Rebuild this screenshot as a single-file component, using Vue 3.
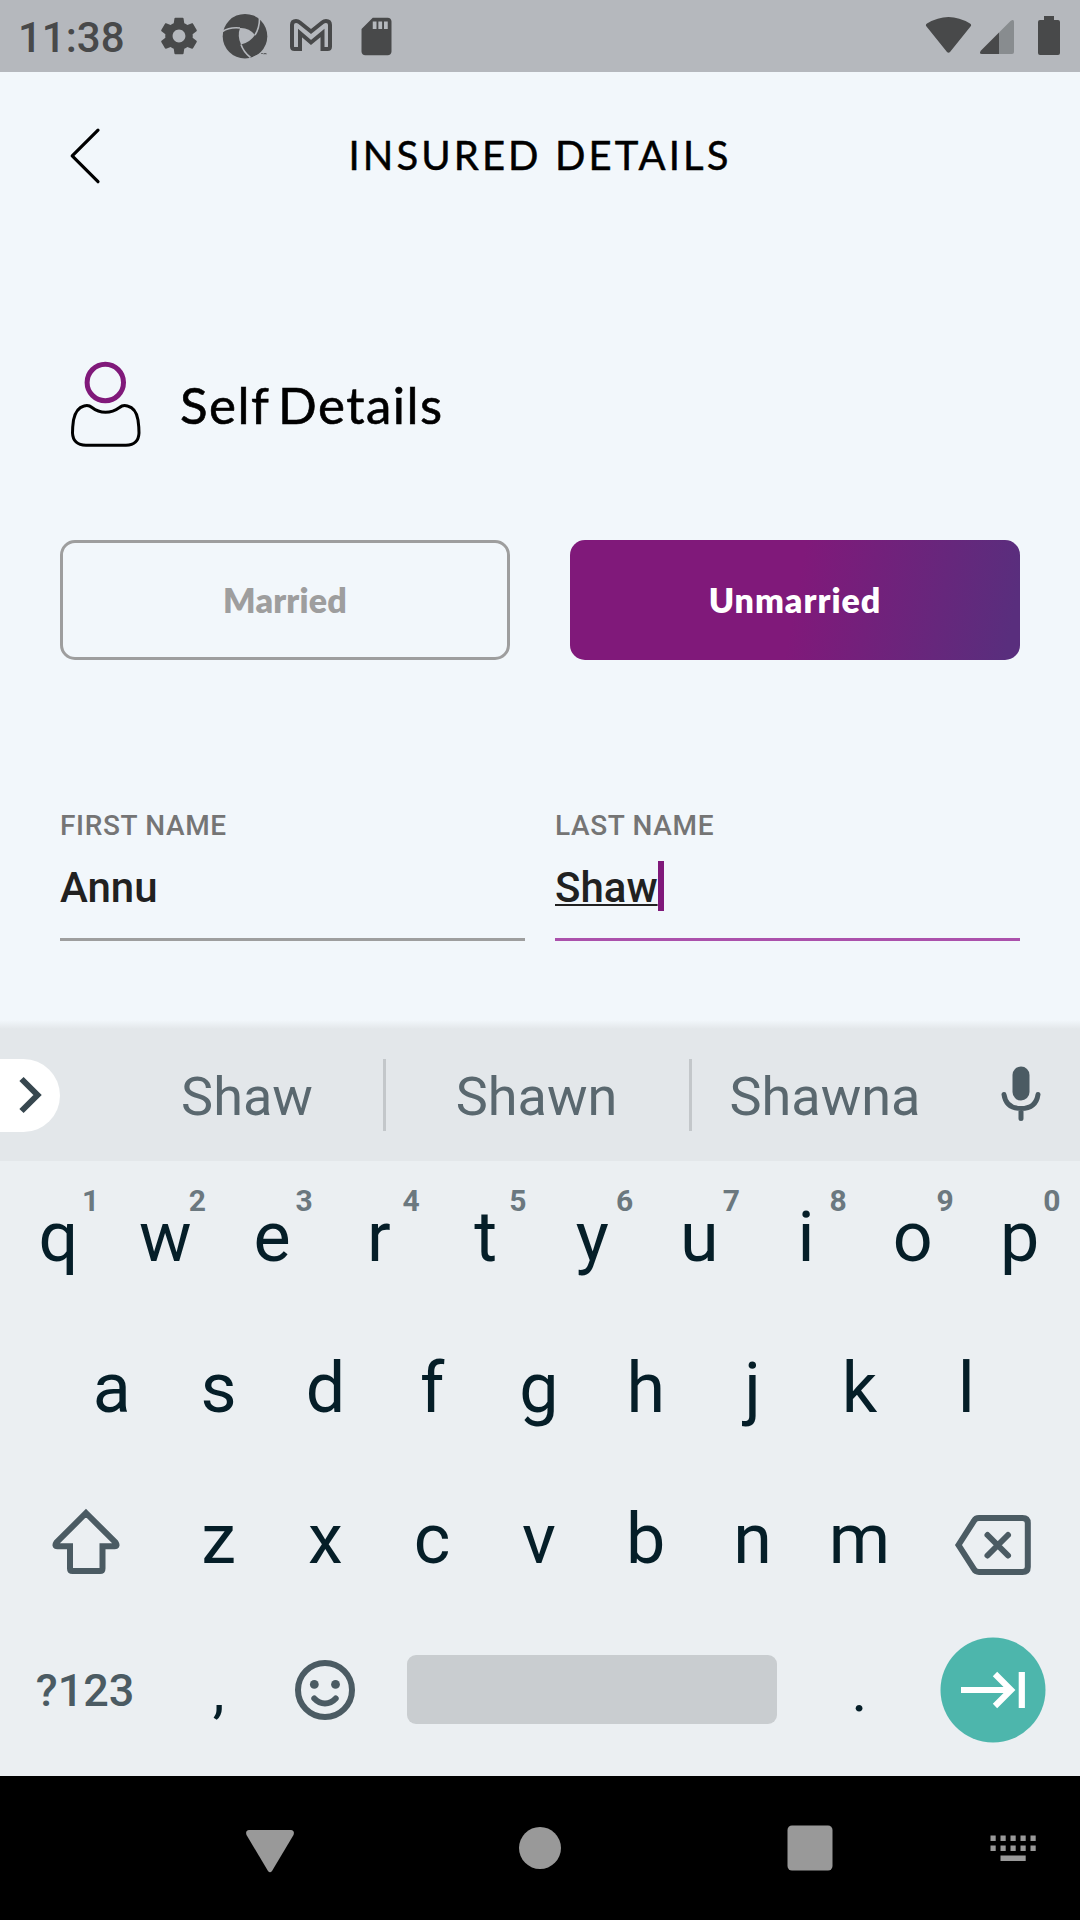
<script setup>
const rowOne = 'qwertyuiop'.split('').map((letter, i) => ({ letter, hint: (i + 1) % 10 }))
const rowTwo = 'asdfghjkl'.split('')
const rowThree = 'zxcvbnm'.split('')
const suggestions = ['Shaw', 'Shawn', 'Shawna']
</script>

<template>
  <div class="screen">
    <header class="status">
      <span class="clock">11:38</span>
      <svg class="gear" width="44" height="44" viewBox="0 0 24 24"><path d="M19.43 12.98c.04-.32.07-.64.07-.98s-.03-.66-.07-.98l2.11-1.65c.19-.15.24-.42.12-.64l-2-3.46c-.12-.22-.39-.3-.61-.22l-2.49 1c-.52-.4-1.08-.73-1.69-.98l-.38-2.65C14.46 2.18 14.25 2 14 2h-4c-.25 0-.46.18-.49.42l-.38 2.65c-.61.25-1.17.59-1.69.98l-2.49-1c-.23-.09-.49 0-.61.22l-2 3.46c-.13.22-.07.49.12.64l2.11 1.65c-.04.32-.07.65-.07.98s.03.66.07.98l-2.11 1.65c-.19.15-.24.42-.12.64l2 3.46c.12.22.39.3.61.22l2.49-1c.52.4 1.08.73 1.69.98l.38 2.65c.03.24.24.42.49.42h4c.25 0 .46-.18.49-.42l.38-2.65c.61-.25 1.17-.59 1.69-.98l2.49 1c.23.09.49 0 .61-.22l2-3.46c.12-.22.07-.49-.12-.64l-2.11-1.65zM12 15.5c-1.93 0-3.5-1.57-3.5-3.5s1.57-3.5 3.5-3.5 3.5 1.57 3.5 3.5-1.57 3.5-3.5 3.5z"/></svg>
      <svg class="swirl" width="46" height="46" viewBox="222 13 46 46">
        <circle cx="245" cy="36.2" r="22.3"/>
        <path class="cut" d="M240 28Q249 27.500 255 35Q250 42.500 241 44.500Q237 36 240 28Z"/>
        <path class="slit" d="M222.500 31.500Q229 27 240 28M259.500 18.500Q259.500 28 255 35M250.500 57.500Q243.500 52 241 44.500"/>
        <path class="cut" d="M252 57.500Q257 54 261.500 54L268 52V59H250Z"/>
        <path class="tm" d="M261 53.500h2M264 54.500v-1.500l1 1l1-1v1.500"/>
      </svg>
      <svg class="mail" width="44" height="44" viewBox="289 14 44 44"><path d="M292 46.500V25Q292 21 296 21Q298 21 299.500 22.300L311 31.500L322.500 22.300Q324 21 326 21Q330 21 330 25V46.500Q330 49 327.500 49H322.500V33L311 42.500L300 33V49H294.500Q292 49 292 46.500Z"/></svg>
      <svg class="sd" width="45" height="45" viewBox="0 0 24 24"><path d="M18 2h-8L4.020 8 4 20c0 1.100.9 2 2 2h12c1.100 0 2-.9 2-2V4c0-1.100-.9-2-2-2zm-6 6h-2V4h2v4zm3 0h-2V4h2v4zm3 0h-2V4h2v4z"/></svg>
      <svg class="signals" width="136" height="42" viewBox="925 15 136 42">
        <path d="M926.500 26.500Q925 24.800 927 23.500Q948.500 10.500 970 23.500Q972 24.800 970.500 26.500L950 52Q948.500 53.500 947 52Z"/>
        <path class="weak" d="M999 32.500L1010.500 21Q1014 18.500 1014 22V52Q1014 54 1012 54H999Z"/>
        <path d="M999 32.500V54H982Q978.500 54 981 50.500Z"/>
        <path d="M1044 16H1054V20H1058Q1060 20 1060 22V53Q1060 55 1058 55H1040Q1038 55 1038 53V22Q1038 20 1040 20H1044Z"/>
      </svg>
    </header>

    <main class="page">
      <div class="titlebar">
        <svg class="back" width="34" height="60" viewBox="68 126 34 60"><path d="M98 130.200L72.200 155.800L98 181.700"/></svg>
        <h1>INSURED DETAILS</h1>
      </div>

      <section class="self">
        <svg width="76" height="92" viewBox="68 359 76 92">
          <circle class="head" cx="105.300" cy="382.500" r="18.200"/>
          <path class="body" d="M84 406Q88.500 404.500 92 407.500Q98 412.300 105.500 412.300Q113 412.300 119.500 407.500Q123 404.500 127.500 406Q136 408 138 420Q139 427 139 433Q138.500 445 126 445.200H86Q73 445 72.500 433Q72.500 427 73.500 420Q76 408 84 406Z"/>
        </svg>
        <h2>Self Details</h2>
      </section>

      <div class="choices">
        <button class="choice">Married</button>
        <button class="choice active">Unmarried</button>
      </div>

      <div class="fields">
        <div class="field">
          <label>FIRST NAME</label>
          <div class="value"><span>Annu</span></div>
        </div>
        <div class="field focused">
          <label>LAST NAME</label>
          <div class="value"><span class="composing">Shaw</span><i class="caret"></i></div>
        </div>
      </div>
    </main>

    <section class="keyboard">
      <div class="suggest">
        <div class="more"><svg width="24" height="38" viewBox="0 0 24 38"><path d="M2.500 3L18.500 19L2.500 35"/></svg></div>
        <div v-for="word in suggestions" :key="word" class="word">{{ word }}</div>
        <svg class="mic" width="40" height="56" viewBox="0 0 40 56">
          <rect x="11.500" y="0.500" width="17" height="34" rx="8.500"/>
          <path d="M3 28.500Q5 42.500 20 42.500Q35 42.500 37 28.500M20 43V52.500"/>
        </svg>
      </div>

      <div class="row">
        <div v-for="k in rowOne" :key="k.letter" class="key">{{ k.letter }}<span class="hint">{{ k.hint }}</span></div>
      </div>
      <div class="row inset">
        <div v-for="k in rowTwo" :key="k" class="key">{{ k }}</div>
      </div>
      <div class="row">
        <div class="key wide">
          <svg class="line shift" width="70" height="68" viewBox="51 1508 70 68"><path d="M86 1513L115.500 1542.500Q118 1546.300 114.500 1546.300H102.500V1568.500Q102.500 1571 100 1571H72.500Q70 1571 70 1568.500V1546.300H57.500Q54 1546.300 56.500 1542.500Z"/></svg>
        </div>
        <div v-for="k in rowThree" :key="k" class="key">{{ k }}</div>
        <div class="key wide">
          <svg class="line del" width="78" height="62" viewBox="953 1514 78 62"><path d="M957.500 1545L973 1520.800Q974.500 1518 978 1518H1021.500Q1026.800 1518 1026.800 1523V1567Q1026.800 1572 1021.500 1572H978Q974.500 1572 973 1569.200Z"/><path d="M986.500 1535L1007 1555.500M1007 1535L986.500 1555.500" stroke-linecap="round"/></svg>
        </div>
      </div>
      <div class="row">
        <div class="key wide mode">?123</div>
        <div class="key punct">,</div>
        <div class="key">
          <svg class="line" width="62" height="62" viewBox="-31 -31 62 62"><circle r="27"/><path d="M-10.700 8.500Q-6 13.500 0 13.500Q6 13.500 10.700 8.500" stroke-linecap="round"/><g class="eyes"><circle cx="-10.700" cy="-5.600" r="4.400"/><circle cx="10.500" cy="-5.600" r="4.400"/></g></svg>
        </div>
        <div class="key spacebar"><div></div></div>
        <div class="key punct">.</div>
        <div class="key wide">
          <svg class="next" width="106" height="106" viewBox="-53 -53 106 106"><circle r="52.500"/><path d="M-32 0H16M2 -16L18 0L2 16M28.800 -18V18"/></svg>
        </div>
      </div>
    </section>

    <nav class="nav">
      <svg width="50" height="44" viewBox="245 1829 50 44"><path d="M249 1830H291Q295 1830.500 293.500 1835L272 1871Q270 1873.500 268 1871L246.500 1835Q245 1830.500 249 1830Z"/></svg>
      <svg width="44" height="44" viewBox="-22 -22 44 44"><circle r="21"/></svg>
      <svg width="46" height="46" viewBox="0 0 46 46"><rect x=".5" y=".5" width="45" height="45" rx="4.500"/></svg>
      <svg class="ime" width="47" height="27" viewBox="0 0 47 27">
        <template v-for="c in 5" :key="c">
          <rect :x="c * 10 - 9.500" y=".5" width="5.200" height="5.500"/>
          <rect :x="c * 10 - 9.500" y="10.500" width="5.200" height="5.500"/>
        </template>
        <rect x="10.500" y="20.500" width="25.200" height="5.500"/>
      </svg>
    </nav>
  </div>
</template>

<style>
body { margin: 0; background: #f2f7fb; }
</style>

<style scoped>
.screen { width: 1080px; height: 1920px; overflow: hidden; display: flex; flex-direction: column; background: #f2f7fb; font-family: Roboto, "Liberation Sans", sans-serif; }
svg { display: block; flex: none; }

.status { height: 72px; flex: none; box-sizing: border-box; display: flex; align-items: center; background: #b5b8bd; padding: 0 19px 0 18px; }
.status svg { fill: #48494a; }
.clock { width: 139px; padding-top: 3px; font-size: 42px; font-weight: 500; line-height: 72px; color: #48494a; }
.swirl { margin-left: 21px; }
.status .cut { fill: #b5b8bd; }
.slit { fill: none; stroke: #b5b8bd; stroke-width: 1.6; }
.tm { fill: none; stroke: #48494a; stroke-width: .7; }
.status .mail { margin-left: 21px; fill: none; stroke: #48494a; stroke-width: 4; }
.sd { margin-left: 21px; }
.signals { margin-left: auto; }
.status .weak { fill: #888c8f; }

.page { height: 946px; flex: none; }
.titlebar { height: 168px; display: grid; grid-template-columns: 130px 1fr 130px; align-items: center; }
.back { margin-left: 68px; fill: none; stroke: #000; stroke-width: 3.2; stroke-linecap: round; stroke-linejoin: round; }
h1 { margin: 0 0 2px; font: 400 40px/60px Lato, sans-serif; letter-spacing: 3.1px; text-align: center; color: #000; white-space: nowrap; -webkit-text-stroke: .5px #000; }
.self { height: 92px; margin: 119px 0 0 68px; display: flex; align-items: center; gap: 36px; }
h2 { margin: 0; font: 400 51px/60px Lato, sans-serif; letter-spacing: 1.5px; word-spacing: -6px; color: #000; white-space: nowrap; -webkit-text-stroke: .6px #000; }
.head { fill: none; stroke: #80197a; stroke-width: 5; }
.body { fill: none; stroke: #000; stroke-width: 3; }
.choices { margin: 89px 60px 0; display: flex; gap: 60px; }
.choice { width: 450px; flex: none; height: 120px; box-sizing: border-box; padding: 0; border: 3px solid #9e9e9e; border-radius: 15px; background: transparent; font: 800 34px/40px Lato, sans-serif; letter-spacing: .2px; color: #9e9e9e; }
.choice.active { border: 0; letter-spacing: 1px; color: #fff; background: linear-gradient(100deg, #80197a 50%, #592e7d 97%); }
.fields { margin: 146px 60px 0; display: flex; gap: 30px; }
.field { flex: 1; height: 132px; border-bottom: 3px solid #9e9e9e; }
.field.focused { border-color: #ab51ab; }
label { display: block; font-size: 28px; font-weight: 500; line-height: 40px; letter-spacing: .65px; color: #757575; }
.value { margin-top: 15px; height: 50px; display: flex; align-items: center; font-size: 42px; font-weight: 500; line-height: 50px; color: #212121; }
.value span { padding-top: 4px; }
.composing { text-decoration: underline; text-decoration-thickness: 2px; text-underline-offset: 2px; text-decoration-skip-ink: none; }
.caret { width: 6px; height: 50px; background: #80197a; }

.keyboard { height: 758px; flex: none; background: #ebeff2; color: #051e28; }
.suggest { height: 143px; box-sizing: border-box; padding-top: 11px; display: flex; align-items: center; background: linear-gradient(#f2f7fb 2px, #e3e7ea 11px); }
.more { width: 60px; height: 73px; border-radius: 0 37px 37px 0; background: #fff; display: flex; align-items: center; box-sizing: border-box; padding-left: 19px; }
.more svg { fill: none; stroke: #37474f; stroke-width: 6; }
.word { height: 72px; line-height: 76px; font-size: 54px; color: #5a686f; text-align: center; box-sizing: border-box; width: 306px; padding-right: 2px; border-right: 3px solid #c3c7ca; white-space: nowrap; }
.more + .word { width: 275px; padding-right: 0; margin-left: 51px; }
.word:nth-child(4) { width: 269px; padding-right: 3px; border: 0; }
.mic { margin: 0 0 2px 40px; fill: #4b5b63; }
.mic path { fill: none; stroke: #4b5b63; stroke-width: 5; stroke-linecap: round; }
.row { height: 151px; padding: 0 5px; display: flex; }
.row.inset { padding: 0 58.400px; }
.key { position: relative; width: 106.800px; flex: none; display: flex; align-items: center; justify-content: center; font-size: 70px; line-height: 80px; }
.hint { position: absolute; left: 77px; top: 20px; font-size: 30px; line-height: 40px; font-weight: 700; color: #6b787f; }
.key.wide { width: 160.200px; }
.key.mode, .key.punct { box-sizing: border-box; padding-top: 3px; }
.mode { font-size: 45px; font-weight: 500; color: #4b5b63; }
.punct { font-size: 60px; }
.line { fill: none; stroke: #4b5b63; stroke-width: 6; }
.shift { margin: 6px 0 0 2px; }
.del { margin-top: 12px; }
.eyes { fill: #4b5b63; stroke: none; }
.key.spacebar { width: 427.200px; }
.spacebar div { width: 370px; height: 69px; border-radius: 9px; background: #c9cdd0; }
.next { fill: #4db6ac; }
.next path { fill: none; stroke: #fff; stroke-width: 6.200; }

.nav { flex: 1; background: #000; display: flex; align-items: center; padding-left: 245px; }
.nav svg { fill: #999; }
.nav svg:nth-child(1) { margin-top: 6px; }
.nav svg:nth-child(2) { margin-left: 223px; }
.nav svg:nth-child(3) { margin-left: 225px; }
.nav .ime { margin-left: 157px; }
</style>
